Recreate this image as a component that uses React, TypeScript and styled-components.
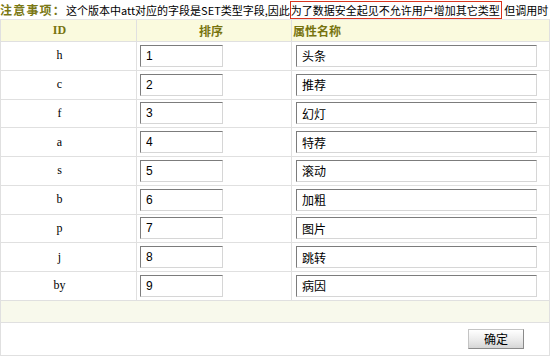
import React from "react";
import styled, { createGlobalStyle } from "styled-components";

const GlobalStyle = createGlobalStyle`
  html, body {
    margin: 0;
    padding: 0;
    background: #fff;
    font-family: "Liberation Sans", "Noto Sans CJK SC", sans-serif;
    font-size: 12px;
    color: #000;
  }
`;

const Page = styled.div`
  width: 550px;
  height: 356px;
  overflow: hidden;
`;

const Notice = styled.div`
  height: 19px;
  line-height: 19px;
  white-space: nowrap;
  overflow: hidden;
  font-size: 11px;
  font-family: "Noto Sans CJK SC", sans-serif;
`;

const NoticeLabel = styled.b`
  color: #7a7814;
  font-size: 12px;
  letter-spacing: 1.2px;
`;

const Mark = styled.span`
  border: 1px solid #d9351f;
  padding: 0 1px 0 0;
`;

const Table = styled.div`
  border: 1px solid #e0e0e0;
  border-top: 1px solid #e6e6e6;
  height: 335px;
  display: flex;
  flex-direction: column;
`;

const Row = styled.div<{ $head?: boolean }>`
  display: grid;
  grid-template-columns: 136px 155px 1fr;
  height: ${(p) => (p.$head ? "22px" : "28.75px")};
  box-sizing: border-box;
  border-bottom: 1px solid #e0e0e0;
  background: ${(p) => (p.$head ? "#fafade" : "#fff")};
  flex: none;
`;

const Cell = styled.div<{ $align?: string; $pad?: string }>`
  display: flex;
  align-items: center;
  justify-content: ${(p) => p.$align || "flex-start"};
  padding: ${(p) => p.$pad || "0"};
  border-right: 1px solid #e0e0e0;
  &:last-child {
    border-right: none;
  }
`;

const HeadText = styled.span`
  color: #77740f;
  font-weight: bold;
  font-size: 12px;
  font-family: "Noto Sans CJK SC", sans-serif;
`;

const HeadId = styled(HeadText)`
  font-family: "Liberation Serif", "Noto Sans CJK SC", serif;
`;

const Key = styled.span`
  font-family: "Liberation Serif", serif;
  font-size: 12px;
`;

const Field = styled.input<{ $w: number }>`
  box-sizing: border-box;
  width: ${(p) => p.$w}px;
  height: 22px;
  margin: 0;
  padding: 0 5px;
  border: 1px solid;
  border-color: #7c7c7c #d6d6d6 #d6d6d6 #7c7c7c;
  font-family: "Liberation Sans", "Noto Sans CJK SC", sans-serif;
  font-size: 12px;
  color: #000;
  background: #fff;
  outline: none;
`;

const FooterBand = styled.div`
  height: 22px;
  box-sizing: border-box;
  border-bottom: 1px solid #e0e0e0;
  background: #f8f9ec;
  flex: none;
`;

const Actions = styled.div`
  flex: 1;
  display: flex;
  align-items: center;
  justify-content: flex-end;
  padding-right: 25px;
`;

const Button = styled.button`
  width: 56px;
  height: 20px;
  padding: 0;
  border: 1px solid #c4c4c4;
  border-right-color: #8a8a8a;
  border-bottom-color: #8a8a8a;
  background: linear-gradient(#ffffff, #e9e9e9 60%, #d6d6d6);
  font-family: "Noto Sans CJK SC", sans-serif;
  font-size: 12px;
  color: #000;
`;

const rows = [
  ["h", "1", "头条"],
  ["c", "2", "推荐"],
  ["f", "3", "幻灯"],
  ["a", "4", "特荐"],
  ["s", "5", "滚动"],
  ["b", "6", "加粗"],
  ["p", "7", "图片"],
  ["j", "8", "跳转"],
  ["by", "9", "病因"],
];

export default function App() {
  return (
    <Page>
      <GlobalStyle />
      <Notice>
        <NoticeLabel>注意事项：</NoticeLabel>这个版本中att对应的字段是SET类型字段,因此
        <Mark>为了数据安全起见不允许用户增加其它类型</Mark> 但调用时
      </Notice>
      <Table>
        <Row $head>
          <Cell $align="center" $pad="0 18px 0 0">
            <HeadId>ID</HeadId>
          </Cell>
          <Cell $align="center" $pad="0 6px 0 0">
            <HeadText>排序</HeadText>
          </Cell>
          <Cell $pad="0 0 0 1px">
            <HeadText>属性名称</HeadText>
          </Cell>
        </Row>
        {rows.map(([k, order, name]) => (
          <Row key={k}>
            <Cell $align="center" $pad="0 18px 0 0">
              <Key>{k}</Key>
            </Cell>
            <Cell $pad="0 0 0 3px">
              <Field $w={83} defaultValue={order} />
            </Cell>
            <Cell $pad="0 0 0 4px">
              <Field $w={241} defaultValue={name} />
            </Cell>
          </Row>
        ))}
        <FooterBand />
        <Actions>
          <Button>确定</Button>
        </Actions>
      </Table>
    </Page>
  );
}
